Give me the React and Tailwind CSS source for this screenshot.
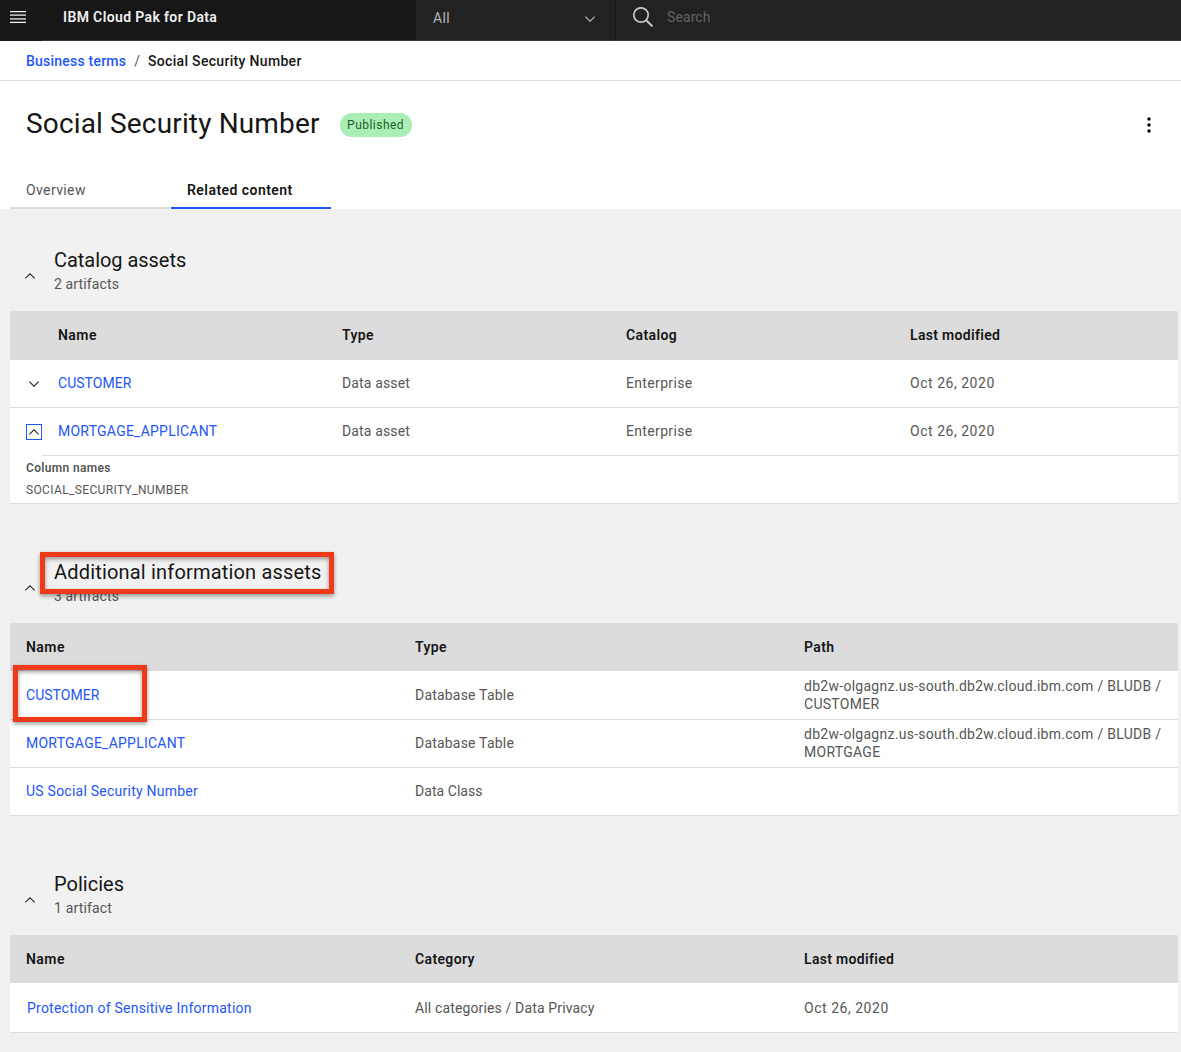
import React from "react";

function Chevron({ up, className = "" }) {
  return (
    <svg viewBox="0 0 16 16" className={`h-4 w-4 shrink-0 ${className}`} fill="currentColor" aria-hidden="true">
      {up ? (
        <path d="M8 5l5 5-.7.7L8 6.4l-4.3 4.3L3 10z" />
      ) : (
        <path d="M8 11L3 6l.7-.7L8 9.6l4.3-4.3L13 6z" />
      )}
    </svg>
  );
}

function Link({ className = "", children }) {
  return (
    <a href="#" className={`text-[#2456f5] ${className}`}>
      {children}
    </a>
  );
}

function SectionHeading({ title, count, titleClass, countClass, marked }) {
  return (
    <div className="flex h-[64px] items-start pl-[22px]">
      <Chevron up className="mt-[21px] text-[#161616]" />
      <div className="relative ml-4 flex flex-col">
        <h2 className={`h-[26px] text-[20px] leading-[26px] whitespace-nowrap text-[#161616] ${titleClass}`}>{title}</h2>
        <p className={`mt-[2px] text-sm leading-[18px] whitespace-nowrap text-[#565656] ${countClass}`}>{count}</p>
        {marked && (
          <div className="absolute -top-[7px] -left-[14px] h-[42px] w-[294px] border-[5px] border-[#ee3a18] drop-shadow-[0_2px_2px_rgba(0,0,0,0.4)]" />
        )}
      </div>
    </div>
  );
}

const assetGrid = "grid grid-cols-[48px_284px_284px_284px_1fr] items-center";
const infoGrid = "grid grid-cols-[389px_389px_1fr] items-center";

function AssetRow({ expanded, name }) {
  return (
    <div className={`${assetGrid} h-[47px] pb-px text-[#565656]`}>
      <button className={`ml-4 mt-[2px] h-4 w-4 text-[#161616] ${expanded ? "outline-1 -outline-offset-1 outline-[#2456f5]" : ""}`}>
        <Chevron up={expanded} />
      </button>
      {name}
      <span className="tracking-[0.15px]">Data asset</span>
      <span className="tracking-[0.34px]">Enterprise</span>
      <span className="tracking-[0.53px]">Oct 26, 2020</span>
    </div>
  );
}

function InfoRow({ name, type, path, className = "h-12 pb-[2px]" }) {
  return (
    <div className={`${infoGrid} ${className} border-b border-[#dcdcdc] text-[#565656]`}>
      <div className="pl-4">{name}</div>
      <div className="pl-4">{type}</div>
      <div className="pl-4 leading-[18px] tracking-[0.275px] whitespace-nowrap">{path}</div>
    </div>
  );
}

export default function App() {
  return (
    <div className="h-[1052px] w-[1181px] overflow-hidden bg-[#f1f1f1] font-['Roboto',sans-serif] text-sm">
      <header className="flex h-[41px] bg-[#171717]">
        <div className="flex w-[42px] pt-[11px] pl-[10px]">
          <svg viewBox="0 0 16 12" className="h-3 w-4" aria-hidden="true">
            <path d="M0 .5h16M0 11.5h16" stroke="#f4f4f4" />
            <path d="M0 1.5h16M0 10.5h16" stroke="#4a4a4a" />
            <path d="M0 3.5h16M0 8.5h16" stroke="#8d8d8d" />
            <path d="M0 4.5h16M0 7.5h16" stroke="#b4b4b4" />
          </svg>
        </div>
        <div className="w-[374px] border-b border-[#393939] pt-[7px] pl-[21px] leading-5 font-semibold tracking-[0.37px] text-[#f0f0f0]">
          IBM Cloud Pak for Data
        </div>
        <div className="flex w-[199px] items-start justify-between border-b border-[#393939] bg-[#222222] pt-2 pr-[17px] pl-[17px] text-[#b4b4b4]">
          <span className="leading-5 tracking-[0.4px]">All</span>
          <Chevron className="mt-[3px] text-[#c6c6c6]" />
        </div>
        <div className="flex flex-1 items-start border-b border-l border-[#393939] border-l-[#171717] bg-[#222222] pl-[17px]">
          <svg viewBox="0 0 20 20" className="mt-[7px] h-5 w-5" fill="none" stroke="#c6c6c6" strokeWidth="1.7" aria-hidden="true">
            <circle cx="8" cy="8" r="7.2" />
            <path d="M13.2 13.2l6.2 6.2" strokeWidth="2" />
          </svg>
          <span className="ml-[14px] pt-[7px] leading-5 tracking-[0.1px] text-[#636363]">Search</span>
        </div>
      </header>

      <nav className="flex h-10 items-center border-b border-[#dcdcdc] bg-white pl-[26px] font-medium whitespace-nowrap">
        <Link className="tracking-[0.22px]">Business terms</Link>
        <span className="ml-2 font-normal text-[#565656]">/</span>
        <span className="ml-2 tracking-[0.32px] text-[#161616]">Social Security Number</span>
      </nav>

      <div className="flex h-[128px] flex-col bg-white">
        <div className="flex h-[91px] items-center pr-6 pl-[26px]">
          <h1 className="-mt-[5px] text-[28px] leading-9 tracking-[0.15px] whitespace-nowrap text-[#161616]">Social Security Number</h1>
          <span className="mt-[-3px] ml-[20px] flex h-6 w-[72px] items-center rounded-full bg-[#abeeb5] pl-[7.5px] text-xs tracking-[0.48px] text-[#1d5f2b]">
            Published
          </span>
          <svg viewBox="0 0 16 16" className="mt-[-4px] ml-auto h-4 w-4" aria-hidden="true">
            <circle cx="8" cy="2" r="1.7" />
            <circle cx="8" cy="8" r="1.7" />
            <circle cx="8" cy="14" r="1.7" />
          </svg>
        </div>
        <div className="flex h-[37px] gap-px pl-[10px]">
          <div className="w-40 border-b-2 border-[#dcdcdc] pt-2 pl-4 leading-5 tracking-[0.38px] text-[#565656]">Overview</div>
          <div className="w-40 border-b-2 border-[#2456f5] pt-2 pl-4 leading-5 font-semibold tracking-[0.45px] text-[#161616]">
            Related content
          </div>
        </div>
      </div>

      <section className="pt-[38px]">
        <SectionHeading title="Catalog assets" count="2 artifacts" titleClass="tracking-[-0.04px]" countClass="tracking-[0.13px]" />
        <div className="mr-[3px] ml-[10px]">
          <div className={`${assetGrid} h-[49px] bg-[#dcdcdc] pb-px font-semibold text-[#161616]`}>
            <span />
            <span className="tracking-[0.45px]">Name</span>
            <span className="tracking-[0.35px]">Type</span>
            <span className="tracking-[0.4px]">Catalog</span>
            <span className="tracking-[0.32px]">Last modified</span>
          </div>
          <div className="bg-white">
            <AssetRow name={<Link className="tracking-[0.04px]">CUSTOMER</Link>} />
            <div className="h-px bg-[#dcdcdc]" />
            <AssetRow expanded name={<Link className="tracking-[0.24px]">MORTGAGE_APPLICANT</Link>} />
            <div className="ml-8 h-px bg-[#dcdcdc]" />
            <div className="h-12 border-b border-[#dcdcdc] pl-4 text-xs text-[#565656]">
              <p className="pt-1 leading-4 font-semibold tracking-[0.34px]">Column names</p>
              <p className="mt-[6px] leading-4 tracking-[0.36px]">SOCIAL_SECURITY_NUMBER</p>
            </div>
          </div>
        </div>
      </section>

      <section className="pt-[55px]">
        <SectionHeading marked title="Additional information assets" count="3 artifacts" titleClass="tracking-[0.18px]" countClass="tracking-[0.13px]" />
        <div className="relative mr-[3px] ml-[10px]">
          <div className={`${infoGrid} h-12 bg-[#dcdcdc] font-semibold text-[#161616]`}>
            <span className="pl-4 tracking-[0.45px]">Name</span>
            <span className="pl-4 tracking-[0.35px]">Type</span>
            <span className="pl-4 tracking-[0.4px]">Path</span>
          </div>
          <div className="bg-white">
            <InfoRow
              className="h-[49px]"
              name={<Link className="tracking-[0.04px]">CUSTOMER</Link>}
              type={<span className="tracking-[0.2px]">Database Table</span>}
              path={<>db2w-olgagnz.us-south.db2w.cloud.ibm.com / BLUDB /<br />CUSTOMER</>}
            />
            <InfoRow
              name={<Link className="tracking-[0.24px]">MORTGAGE_APPLICANT</Link>}
              type={<span className="tracking-[0.2px]">Database Table</span>}
              path={<>db2w-olgagnz.us-south.db2w.cloud.ibm.com / BLUDB /<br />MORTGAGE</>}
            />
            <InfoRow
              name={<Link className="tracking-[0.24px]">US Social Security Number</Link>}
              type={<span className="tracking-[0.05px]">Data Class</span>}
            />
          </div>
          <div className="absolute top-[42px] left-[3px] h-[57px] w-[134px] border-[5px] border-[#ee3a18] drop-shadow-[0_2px_2px_rgba(0,0,0,0.4)]" />
        </div>
      </section>

      <section className="pt-[55px]">
        <SectionHeading title="Policies" count="1 artifact" titleClass="tracking-[0.02px]" countClass="tracking-[0.17px]" />
        <div className="mr-[3px] ml-[10px]">
          <div className={`${infoGrid} h-12 bg-[#dcdcdc] font-semibold text-[#161616]`}>
            <span className="pl-4 tracking-[0.45px]">Name</span>
            <span className="pl-4 tracking-[0.36px]">Category</span>
            <span className="pl-4 tracking-[0.32px]">Last modified</span>
          </div>
          <div className={`${infoGrid} h-[50px] border-b border-[#dcdcdc] bg-white text-[#565656]`}>
            <Link className="pl-[17px] tracking-[0.23px]">Protection of Sensitive Information</Link>
            <span className="pl-4 tracking-[0.14px]">All categories / Data Privacy</span>
            <span className="pl-4 tracking-[0.53px]">Oct 26, 2020</span>
          </div>
        </div>
      </section>
    </div>
  );
}
